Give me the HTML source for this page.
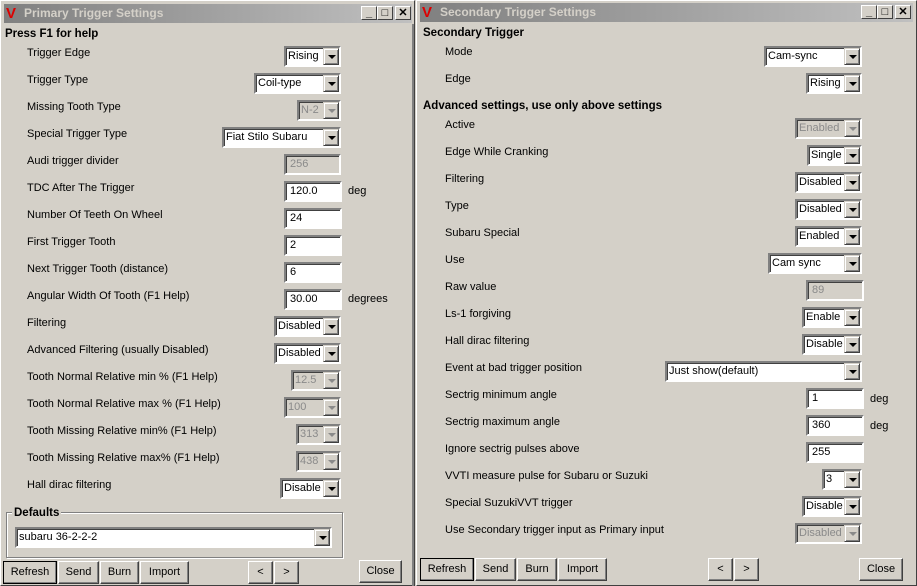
<!DOCTYPE html>
<html><head><meta charset="utf-8"><style>
*{box-sizing:border-box;margin:0;padding:0}
body{width:917px;height:586px;background:#d4d0c8;font-family:"Liberation Sans",sans-serif;font-size:11px;color:#000;position:relative;overflow:hidden}
.a{position:absolute}
.win{position:absolute;background:#d4d0c8;border:1px solid #fff;border-right-color:#404040;border-bottom-color:#404040}
.tb{position:absolute;height:19px;background:linear-gradient(90deg,#808080,#c0c0c0);color:#d4d0c8;font-weight:bold;font-size:12px;line-height:19px;padding-left:20px}
.logo{position:absolute;color:#d00;font-weight:bold;font-size:15px;line-height:15px}
.wb{position:absolute;width:16px;height:14px;background:#d4d0c8;border:1px solid #fff;border-right-color:#404040;border-bottom-color:#404040;color:#000;font-size:11px;line-height:12px;text-align:center;font-weight:bold}
.h{position:absolute;font-weight:bold;line-height:14px;font-size:11.5px}
.l{position:absolute;line-height:14px}
.cb,.tf{position:absolute;height:21px;background:#fff;border:2px solid;border-color:#808080 #fff #fff #808080;box-shadow:inset 1px 1px 0 #404040;line-height:17px;padding-left:2px;white-space:nowrap;overflow:hidden}
.cb i{position:absolute;right:0;top:0;width:16px;height:17px;background:#d4d0c8;border:1px solid;border-color:#d4d0c8 #404040 #404040 #d4d0c8;box-shadow:inset 1px 1px 0 #fff,inset -1px -1px 0 #808080}
.cb i:after{content:"";position:absolute;left:4px;top:6px;border:4px solid transparent;border-top:4px solid #000;border-bottom:0}
.d{background:#d4d0c8;color:#8a8a8a}
.d i:after{border-top-color:#8a8a8a}
.tf{padding-left:4px}
.bt{position:absolute;height:23px;background:#d4d0c8;border:1px solid;border-color:#fff #404040 #404040 #fff;box-shadow:inset -1px -1px 0 #808080;text-align:center;line-height:20px}
.bt.f{outline:1px solid #000;outline-offset:-1px}
.gb{position:absolute;border:1px solid #808080;box-shadow:1px 1px 0 #fff,inset 1px 1px 0 #fff}
</style></head><body>
<div class="win" style="left:0;top:0;width:415px;height:586px"></div>
<div class="tb" style="left:4px;top:4px;width:408px">Primary Trigger Settings</div>
<div class="logo" style="left:6px;top:6px">V</div>
<div class="wb" style="left:361px;top:6px">_</div><div class="wb" style="left:377px;top:6px">□</div><div class="wb" style="left:395px;top:6px">✕</div>
<div class="h" style="left:5px;top:27px">Press F1 for help</div>
<div class="l" style="left:27px;top:46px">Trigger Edge</div><div class="cb" style="left:284px;top:46px;width:57px">Rising<i></i></div>
<div class="l" style="left:27px;top:73px">Trigger Type</div><div class="cb" style="left:254px;top:73px;width:87px">Coil-type<i></i></div>
<div class="l" style="left:27px;top:100px">Missing Tooth Type</div><div class="cb d" style="left:297px;top:100px;width:44px">N-2<i></i></div>
<div class="l" style="left:27px;top:127px">Special Trigger Type</div><div class="cb" style="left:222px;top:127px;width:119px">Fiat Stilo Subaru<i></i></div>
<div class="l" style="left:27px;top:154px">Audi trigger divider</div><div class="tf d" style="left:284px;top:154px;width:57px">256</div>
<div class="l" style="left:27px;top:181px">TDC After The Trigger</div><div class="tf" style="left:284px;top:181px;width:58px">120.0</div><div class="l" style="left:348px;top:184px">deg</div>
<div class="l" style="left:27px;top:208px">Number Of Teeth On Wheel</div><div class="tf" style="left:284px;top:208px;width:58px">24</div>
<div class="l" style="left:27px;top:235px">First Trigger Tooth</div><div class="tf" style="left:284px;top:235px;width:58px">2</div>
<div class="l" style="left:27px;top:262px">Next Trigger Tooth (distance)</div><div class="tf" style="left:284px;top:262px;width:58px">6</div>
<div class="l" style="left:27px;top:289px">Angular Width Of Tooth (F1 Help)</div><div class="tf" style="left:284px;top:289px;width:58px">30.00</div><div class="l" style="left:348px;top:292px">degrees</div>
<div class="l" style="left:27px;top:316px">Filtering</div><div class="cb" style="left:274px;top:316px;width:67px">Disabled<i></i></div>
<div class="l" style="left:27px;top:343px">Advanced Filtering (usually Disabled)</div><div class="cb" style="left:274px;top:343px;width:67px">Disabled<i></i></div>
<div class="l" style="left:27px;top:370px">Tooth Normal Relative min % (F1 Help)</div><div class="cb d" style="left:291px;top:370px;width:50px">12.5<i></i></div>
<div class="l" style="left:27px;top:397px">Tooth Normal Relative max % (F1 Help)</div><div class="cb d" style="left:284px;top:397px;width:57px">100<i></i></div>
<div class="l" style="left:27px;top:424px">Tooth Missing Relative min% (F1 Help)</div><div class="cb d" style="left:296px;top:424px;width:45px">313<i></i></div>
<div class="l" style="left:27px;top:451px">Tooth Missing Relative max% (F1 Help)</div><div class="cb d" style="left:296px;top:451px;width:45px">438<i></i></div>
<div class="l" style="left:27px;top:478px">Hall dirac filtering</div><div class="cb" style="left:280px;top:478px;width:61px">Disable<i></i></div>
<div class="gb" style="left:6px;top:512px;width:337px;height:46px"></div>
<div class="h" style="left:12px;top:506px;background:#d4d0c8;padding:0 2px">Defaults</div>
<div class="cb" style="left:15px;top:527px;width:317px">subaru 36-2-2-2<i></i></div>
<div class="bt f" style="left:3px;top:561px;width:54px">Refresh</div>
<div class="bt" style="left:58px;top:561px;width:41px">Send</div>
<div class="bt" style="left:100px;top:561px;width:39px">Burn</div>
<div class="bt" style="left:140px;top:561px;width:49px">Import</div>
<div class="bt" style="left:248px;top:561px;width:25px">&lt;</div>
<div class="bt" style="left:274px;top:561px;width:25px">&gt;</div>
<div class="bt" style="left:359px;top:560px;width:43px">Close</div>
<div class="a" style="left:412px;top:24px;width:2px;height:562px;background:#808080"></div>

<div class="win" style="left:416px;top:0;width:501px;height:586px"></div>
<div class="tb" style="left:420px;top:3px;width:493px">Secondary Trigger Settings</div>
<div class="logo" style="left:422px;top:5px">V</div>
<div class="wb" style="left:861px;top:5px">_</div><div class="wb" style="left:877px;top:5px">□</div><div class="wb" style="left:895px;top:5px">✕</div>
<div class="h" style="left:423px;top:26px">Secondary Trigger</div>
<div class="l" style="left:445px;top:45px">Mode</div><div class="cb" style="left:764px;top:46px;width:98px">Cam-sync<i></i></div>
<div class="l" style="left:445px;top:72px">Edge</div><div class="cb" style="left:806px;top:73px;width:56px">Rising<i></i></div>
<div class="h" style="left:423px;top:99px">Advanced settings, use only above settings</div>
<div class="l" style="left:445px;top:118px">Active</div><div class="cb d" style="left:795px;top:118px;width:67px">Enabled<i></i></div>
<div class="l" style="left:445px;top:145px">Edge While Cranking</div><div class="cb" style="left:807px;top:145px;width:55px">Single<i></i></div>
<div class="l" style="left:445px;top:172px">Filtering</div><div class="cb" style="left:795px;top:172px;width:67px">Disabled<i></i></div>
<div class="l" style="left:445px;top:199px">Type</div><div class="cb" style="left:795px;top:199px;width:67px">Disabled<i></i></div>
<div class="l" style="left:445px;top:226px">Subaru Special</div><div class="cb" style="left:795px;top:226px;width:67px">Enabled<i></i></div>
<div class="l" style="left:445px;top:253px">Use</div><div class="cb" style="left:768px;top:253px;width:94px">Cam sync<i></i></div>
<div class="l" style="left:445px;top:280px">Raw value</div><div class="tf d" style="left:806px;top:280px;width:58px">89</div>
<div class="l" style="left:445px;top:307px">Ls-1 forgiving</div><div class="cb" style="left:802px;top:307px;width:60px">Enable<i></i></div>
<div class="l" style="left:445px;top:334px">Hall dirac filtering</div><div class="cb" style="left:802px;top:334px;width:60px">Disable<i></i></div>
<div class="l" style="left:445px;top:361px">Event at bad trigger position</div><div class="cb" style="left:665px;top:361px;width:197px">Just show(default)<i></i></div>
<div class="l" style="left:445px;top:388px">Sectrig minimum angle</div><div class="tf" style="left:806px;top:388px;width:58px">1</div><div class="l" style="left:870px;top:392px">deg</div>
<div class="l" style="left:445px;top:415px">Sectrig maximum angle</div><div class="tf" style="left:806px;top:415px;width:58px">360</div><div class="l" style="left:870px;top:419px">deg</div>
<div class="l" style="left:445px;top:442px">Ignore sectrig pulses above</div><div class="tf" style="left:806px;top:442px;width:58px">255</div>
<div class="l" style="left:445px;top:469px">VVTI measure pulse for Subaru or Suzuki</div><div class="cb" style="left:822px;top:469px;width:40px">3<i></i></div>
<div class="l" style="left:445px;top:496px">Special SuzukiVVT trigger</div><div class="cb" style="left:802px;top:496px;width:60px">Disable<i></i></div>
<div class="l" style="left:445px;top:523px">Use Secondary trigger input as Primary input</div><div class="cb d" style="left:795px;top:523px;width:67px">Disabled<i></i></div>
<div class="bt f" style="left:420px;top:558px;width:54px">Refresh</div>
<div class="bt" style="left:475px;top:558px;width:41px">Send</div>
<div class="bt" style="left:517px;top:558px;width:40px">Burn</div>
<div class="bt" style="left:558px;top:558px;width:49px">Import</div>
<div class="bt" style="left:708px;top:558px;width:25px">&lt;</div>
<div class="bt" style="left:734px;top:558px;width:25px">&gt;</div>
<div class="bt" style="left:859px;top:558px;width:44px">Close</div>
</body></html>
